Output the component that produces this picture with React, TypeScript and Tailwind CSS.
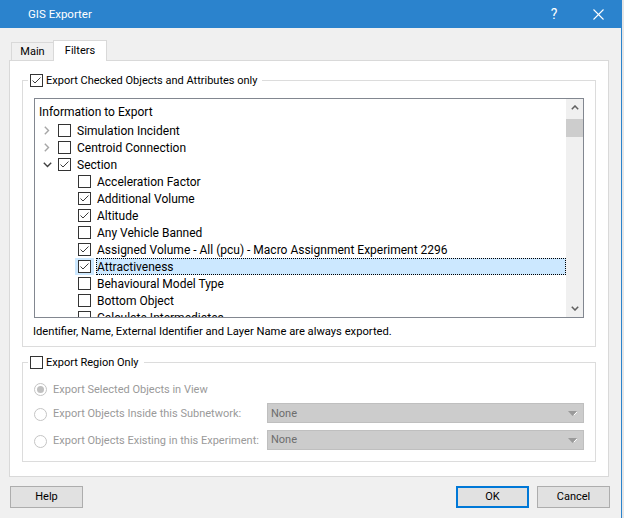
import React from "react";

const FONT = { fontFamily: "Roboto, 'Liberation Sans', sans-serif" };

function Check({ checked }: { checked: boolean }) {
  return (
    <svg width="13" height="13" viewBox="0 0 13 13" className="shrink-0 block">
      <rect x="0.5" y="0.5" width="12" height="12" fill="white" stroke="#333333" />
      {checked && (
        <polyline points="2.5,6.5 5,9 10.5,3.5" fill="none" stroke="#3c3c3c" strokeWidth="1" />
      )}
    </svg>
  );
}

function Radio({ selected }: { selected: boolean }) {
  return (
    <svg width="13" height="13" viewBox="0 0 13 13" className="shrink-0 block">
      <circle cx="6.5" cy="6.5" r="6" fill="white" stroke="#c4c4c4" />
      {selected && <circle cx="6.5" cy="6.5" r="3.5" fill="#c0c0c0" />}
    </svg>
  );
}

function Chevron({ open }: { open: boolean }) {
  return open ? (
    <svg width="9" height="6" viewBox="0 0 9 6" className="block">
      <polyline points="0.8,0.8 4.5,4.5 8.2,0.8" fill="none" stroke="#404040" strokeWidth="1.4" />
    </svg>
  ) : (
    <svg width="6" height="9" viewBox="0 0 6 9" className="block">
      <polyline points="0.8,0.8 4.5,4.5 0.8,8.2" fill="none" stroke="#a6a6a6" strokeWidth="1.4" />
    </svg>
  );
}

type Item = { label: string; checked: boolean; selected?: boolean };

const level1: { label: string; checked: boolean; open: boolean }[] = [
  { label: "Simulation Incident", checked: false, open: false },
  { label: "Centroid Connection", checked: false, open: false },
  { label: "Section", checked: true, open: true },
];

const level2: Item[] = [
  { label: "Acceleration Factor", checked: false },
  { label: "Additional Volume", checked: true },
  { label: "Altitude", checked: true },
  { label: "Any Vehicle Banned", checked: false },
  { label: "Assigned Volume - All (pcu) - Macro Assignment Experiment 2296", checked: true },
  { label: "Attractiveness", checked: true, selected: true },
  { label: "Behavioural Model Type", checked: false },
  { label: "Bottom Object", checked: false },
  { label: "Calculate Intermediates", checked: false },
];

function Combo() {
  return (
    <div className="w-[317px] h-[20px] bg-[#cccccc] border border-[#bfbfbf] flex items-center justify-between pl-[3px] pr-[6px] pt-[1px]">
      <span className="text-[#6d6d6d]">None</span>
      <svg width="9" height="5" viewBox="0 0 9 5" className="block">
        <polygon points="0,0 9,0 4.5,5" fill="#9a9a9a" />
        <line x1="6" y1="4" x2="9" y2="1" stroke="white" strokeWidth="1" />
      </svg>
    </div>
  );
}

export default function App() {
  return (
    <div className="w-[624px] h-[518px] flex bg-[#f0f0f0] text-[11px] leading-[16px] text-black overflow-hidden" style={FONT}>
      <div className="w-[621px] flex flex-col">
        {/* Title bar */}
        <div className="h-[28px] bg-[#2b83cd] flex items-center justify-between text-white">
          <span className="pl-[28px] text-[11.5px]">GIS Exporter</span>
          <div className="flex items-center gap-[34px] mr-[17px]">
            <span className="text-[14px] leading-[14px] w-[10px] text-center">?</span>
            <svg width="11" height="11" viewBox="0 0 11 11" className="block">
              <line x1="0.5" y1="0.5" x2="10.5" y2="10.5" stroke="white" strokeWidth="1.1" />
              <line x1="10.5" y1="0.5" x2="0.5" y2="10.5" stroke="white" strokeWidth="1.1" />
            </svg>
          </div>
        </div>

        {/* Content */}
        <div className="flex-1 flex flex-col pl-[9px]">
          {/* Tabs */}
          <div className="mt-[12px] h-[20px] flex items-end pl-[2px]">
            <div className="w-[42px] h-[18px] border border-b-0 border-r-0 border-[#d9d9d9] bg-[#f0f0f0] flex items-center justify-center">
              Main
            </div>
            <div className="relative z-10 w-[54px] h-[21px] -mb-[1px] border border-b-0 border-[#d9d9d9] bg-white flex items-center justify-center pb-[1px]">
              Filters
            </div>
          </div>

          {/* Panel */}
          <div className="w-[600px] h-[417px] border border-[#d9d9d9] bg-white px-[12px] flex flex-col">
            {/* Group 1 */}
            <fieldset className="mt-[11px] border border-[#dcdcdc] w-[574px]">
              <legend className="ml-[5px] px-[2px] flex items-center gap-[3px] h-[16px]">
                <Check checked={true} />
                <span className="pr-[3px] pt-[1px]">Export Checked Objects and Attributes only</span>
              </legend>
              <div className="mt-[10px] ml-[11px] w-[550px] h-[220px] border border-[#828790] flex overflow-hidden text-[12px]">
                <div className="flex-1 flex flex-col overflow-hidden">
                  <div className="h-[23px] pl-[4px] pt-[5px] shrink-0">Information to Export</div>
                  {level1.map((it) => (
                    <div key={it.label} className="h-[17px] shrink-0 flex items-center">
                      <div className="w-[23px] h-[17px] flex items-center justify-center pl-[1px]">
                        <Chevron open={it.open} />
                      </div>
                      <Check checked={it.checked} />
                      <span className="ml-[6px] whitespace-nowrap">{it.label}</span>
                    </div>
                  ))}
                  {level2.map((it) => (
                    <div key={it.label} className="h-[17px] shrink-0 flex items-stretch">
                      <div className="w-[40px] shrink-0" />
                      <div className={`w-[19px] shrink-0 flex items-center pl-[3px] ${it.selected ? "bg-[#cce8ff]" : ""}`}>
                        <Check checked={it.checked} />
                      </div>
                      <div
                        className={`ml-[2px] flex-1 flex items-center whitespace-nowrap ${
                          it.selected ? "bg-[#cce8ff] border border-dotted border-black" : "pl-[1px]"
                        }`}
                      >
                        {it.label}
                      </div>
                    </div>
                  ))}
                </div>
                {/* Scrollbar */}
                <div className="w-[17px] shrink-0 bg-[#f0f0f0] flex flex-col">
                  <div className="h-[17px] flex items-center justify-center">
                    <svg width="8" height="5" viewBox="0 0 8 5" className="block">
                      <polyline points="0.8,4.3 4,1 7.2,4.3" fill="none" stroke="#606060" strokeWidth="1.5" />
                    </svg>
                  </div>
                  <div className="mt-[3px] h-[18px] bg-[#cdcdcd]" />
                  <div className="flex-1" />
                  <div className="h-[17px] flex items-center justify-center">
                    <svg width="8" height="5" viewBox="0 0 8 5" className="block">
                      <polyline points="0.8,0.7 4,4 7.2,0.7" fill="none" stroke="#606060" strokeWidth="1.5" />
                    </svg>
                  </div>
                </div>
              </div>
              <div className="mt-[6px] ml-[10px] mb-[6px] text-[11.2px]">
                Identifier, Name, External Identifier and Layer Name are always exported.
              </div>
            </fieldset>

            {/* Group 2 */}
            <fieldset className="mt-[7px] border border-[#dcdcdc] w-[574px]">
              <legend className="ml-[5px] px-[2px] flex items-center gap-[3px] h-[16px]">
                <Check checked={false} />
                <span className="pr-[3px] pt-[1px]">Export Region Only</span>
              </legend>
              <div className="ml-[11px] flex flex-col text-[#9a9a9a] pb-[11px]">
                <div className="mt-[11px] h-[16px] flex items-center gap-[6px]">
                  <Radio selected={true} />
                  <span className="pt-[1px]">Export Selected Objects in View</span>
                </div>
                <div className="mt-[6px] h-[20px] flex items-center">
                  <div className="w-[233px] flex items-center gap-[6px] pt-[2px] whitespace-nowrap">
                    <Radio selected={false} />
                    <span>Export Objects Inside this Subnetwork:</span>
                  </div>
                  <Combo />
                </div>
                <div className="mt-[6px] h-[21px] flex items-center">
                  <div className="w-[233px] flex items-center gap-[6px] pt-[3px] whitespace-nowrap">
                    <Radio selected={false} />
                    <span>Export Objects Existing in this Experiment:</span>
                  </div>
                  <Combo />
                </div>
              </div>
            </fieldset>
          </div>

          {/* Buttons */}
          <div className="mt-[9px] w-[601px] flex pl-[1px]">
            <button className="w-[73px] h-[22px] bg-[#e1e1e1] border border-[#adadad]">Help</button>
            <div className="flex-1" />
            <button className="w-[73px] h-[22px] bg-[#e1e1e1] border-2 border-[#0078d7]">OK</button>
            <button className="ml-[8px] w-[73px] h-[22px] bg-[#e1e1e1] border border-[#adadad]">Cancel</button>
          </div>
        </div>
      </div>
      <div className="w-px bg-[#2b83cd]" />
      <div className="w-[2px] bg-[#e6e6e6]" />
    </div>
  );
}
